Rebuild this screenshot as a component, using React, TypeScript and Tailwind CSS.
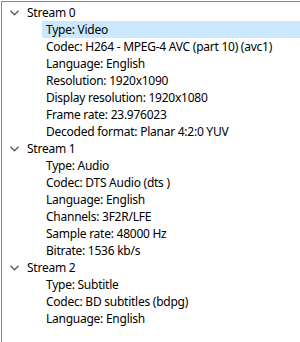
const streams = [
  {
    name: "Stream 0",
    items: [
      "Type: Video",
      "Codec: H264 - MPEG-4 AVC (part 10) (avc1)",
      "Language: English",
      "Resolution: 1920x1090",
      "Display resolution: 1920x1080",
      "Frame rate: 23.976023",
      "Decoded format: Planar 4:2:0 YUV",
    ],
  },
  {
    name: "Stream 1",
    items: [
      "Type: Audio",
      "Codec: DTS Audio (dts )",
      "Language: English",
      "Channels: 3F2R/LFE",
      "Sample rate: 48000 Hz",
      "Bitrate: 1536 kb/s",
    ],
  },
  {
    name: "Stream 2",
    items: ["Type: Subtitle", "Codec: BD subtitles (bdpg)", "Language: English"],
  },
];

function Chevron() {
  return (
    <svg width="9" height="6" viewBox="0 0 9 6" className="ml-[8px] mr-[8px] shrink-0">
      <path d="M0.5 0.8 L4.5 4.8 L8.5 0.8" fill="none" stroke="#5a5a5a" strokeWidth="1.3" />
    </svg>
  );
}

export default function App() {
  return (
    <div
      className="w-[300px] h-[342px] bg-white pl-[1px] pt-[1px] overflow-hidden"
      style={{ fontFamily: '"Noto Sans", "Liberation Sans", sans-serif' }}
    >
      <div className="h-full border-l border-t border-[#828790] pt-[2px] text-[12px] tracking-[-0.25px] text-black">
        {streams.map((s, si) => (
          <div key={s.name}>
            <div className="h-[17px] flex items-center whitespace-nowrap">
              <Chevron />
              <span>{s.name}</span>
            </div>
            {s.items.map((it, i) => (
              <div
                key={it}
                className={
                  "h-[17px] ml-[40px] pl-[4px] flex items-center whitespace-nowrap " +
                  (si === 0 && i === 0 ? "bg-[#cce8ff]" : "")
                }
              >
                {it}
              </div>
            ))}
          </div>
        ))}
      </div>
    </div>
  );
}
